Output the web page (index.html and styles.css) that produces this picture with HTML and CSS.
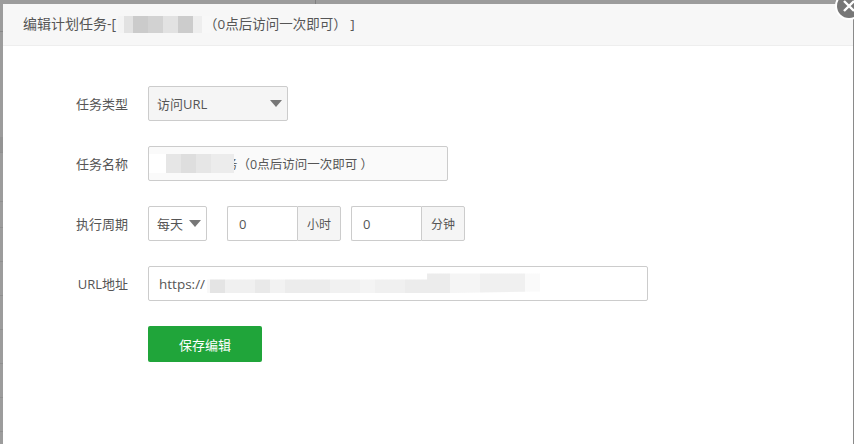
FILE: index.html
```html
<!DOCTYPE html>
<html lang="zh-CN">
<head>
<meta charset="utf-8">
<title>编辑计划任务</title>
<link rel="stylesheet" href="styles.css">
</head>
<body>
<div class="backdrop">
  <div class="modal">
    <a class="close" aria-label="关闭">
      <svg viewBox="0 0 20 20" width="20" height="20"><path d="M5 5l10 10M15 5L5 15" stroke="#fff" stroke-width="2.4" fill="none"/></svg>
    </a>
    <header class="modal-head">编辑计划任务-[<span class="blur blur-title"></span><span class="head-tail">（0点后访问一次即可） ]</span></header>
    <form class="form">
      <div class="row">
        <label class="label">任务类型</label>
        <div class="select select-type">访问URL<i class="caret"></i></div>
      </div>
      <div class="row">
        <label class="label">任务名称</label>
        <div class="input input-name"><span class="blur blur-name"></span>务（0点后访问一次即可 ）</div>
      </div>
      <div class="row">
        <label class="label">执行周期</label>
        <div class="select select-cycle">每天<i class="caret"></i></div>
        <div class="group group-first"><div class="input num">0</div><div class="addon">小时</div></div>
        <div class="group"><div class="input num">0</div><div class="addon">分钟</div></div>
      </div>
      <div class="row">
        <label class="label">URL地址</label>
        <div class="input input-url">https://<span class="blur blur-url"></span></div>
      </div>
      <div class="row">
        <span class="label"></span>
        <button type="button" class="save">保存编辑</button>
      </div>
    </form>
  </div>
</div>
</body>
</html>
```

FILE: styles.css
```css
* { box-sizing: border-box; }
html, body { margin: 0; height: 100%; overflow: hidden; }
body { font-family: "Open Sans", "Noto Sans CJK SC", sans-serif; font-size: 13px; color: #555; }
.backdrop {
  position: relative;
  width: 854px;
  height: 444px;
  padding: 4px 1px 0 3px;
  background-color: #9c9c9c;
  background-image:
    linear-gradient(#808080, #808080),
    linear-gradient(#8a8a8a, #8a8a8a),
    linear-gradient(#888, #888),
    linear-gradient(#909090, #909090),
    linear-gradient(#909090, #909090),
    linear-gradient(#909090, #909090),
    linear-gradient(#909090, #909090),
    linear-gradient(#909090, #909090),
    linear-gradient(#909090, #909090),
    linear-gradient(#909090, #909090),
    linear-gradient(#909090, #909090),
    linear-gradient(#909090, #909090),
    linear-gradient(#949494, #949494);
  background-size: 1px 4px, 1px 424px, 3px 1px, 3px 1px, 3px 1px, 3px 1px, 3px 1px, 3px 1px, 3px 1px, 3px 1px, 3px 1px, 3px 1px, 3px 15px;
  background-position: 315px 0, 853px 20px, 0 31px, 0 201px, 0 227px, 0 261px, 0 295px, 0 329px, 0 363px, 0 397px, 0 431px, 0 152px, 0 137px;
  background-repeat: no-repeat;
}
.modal { position: relative; height: 440px; background: #fff; }
.close {
  position: absolute;
  top: -10px;
  right: -8px;
  width: 24px;
  height: 24px;
  display: flex;
  align-items: center;
  justify-content: center;
  border-radius: 50%;
  background: #777;
  box-shadow: 0 0 0 2px #fff;
}
.modal-head {
  height: 42px;
  padding-left: 20px;
  line-height: 40px;
  font-size: 14px;
  color: #555;
  background: #f7f7f7;
  border-bottom: 1px solid #eee;
  white-space: nowrap;
}
.head-tail { font-size: 13.5px; }
.form { padding-top: 40px; }
.row { display: flex; align-items: stretch; height: 35px; margin-bottom: 25px; }
.label { width: 125px; margin-right: 20px; line-height: 37px; text-align: right; color: #555; }
.select, .input { border: 1px solid #ccc; line-height: 33px; color: #555; }
.select { display: flex; align-items: center; justify-content: space-between; padding: 2px 8px 0; border-radius: 2px; }
.select-type { width: 140px; background: #f5f5f5; }
.select-cycle { width: 59px; background: #fff; }
.caret { width: 0; height: 0; margin: -2px -3px 0 0; border-left: 6px solid transparent; border-right: 6px solid transparent; border-top: 7px solid #777; }
.input { padding: 1px 11px 0; border-radius: 2px; white-space: nowrap; }
.input-name { width: 300px; background: #fafafa; padding-left: 0; font-size: 12.5px; }
.input-url { width: 500px; padding-left: 10px; font-size: 13.5px; }
.group { display: flex; margin-left: 10px; }
.group-first { margin-left: 20px; }
.num { width: 70px; border-radius: 2px 0 0 2px; border-right: 0; font-size: 13px; }
.addon { width: 44px; padding-top: 1px; line-height: 33px; font-size: 12px; text-align: center; color: #555; background: #f5f5f5; border: 1px solid #ccc; border-radius: 0 2px 2px 0; }
.save {
  width: 114px;
  height: 36px;
  padding: 0;
  border: 0;
  border-radius: 2px;
  background: #20a53a;
  color: #fff;
  font: inherit;
}
.blur { display: inline-block; vertical-align: middle; position: relative; }
.blur-title {
  width: 93px;
  height: 17px;
  margin: -2px -7px 0 2px;
  z-index: 1;
  background: linear-gradient(90deg, #f4f4f4 0 6px, #e2e2e2 6px 15px, #cbcbcb 15px 30px, #d2d2d2 30px 45px, #e2e2e2 45px 60px, #ccc 60px 75px, #eee 75px 84px, #f8f8f8 84px 93px);
}
.blur-name {
  width: 85px;
  height: 19px;
  margin: -5px -9px 0 0;
  z-index: 1;
  background: linear-gradient(90deg, #fff 0 17px, #e6e6e6 17px 32px, #dedede 32px 47px, #e6e6e6 47px 62px, #ececec 62px 85px);
}
.blur-url {
  width: 333px;
  height: 20px;
  margin: -4px 0 0 2px;
  clip-path: polygon(0 6px, 220px 6px, 220px 0, 333px 0, 333px 18px, 220px 20px, 0 20px);
  background: linear-gradient(90deg, #f8f8f8 0 3px, #e4e4e4 3px 18px, #f0f0f0 18px 48px, #e9e9e9 48px 63px, #f2f2f2 63px 78px, #ececec 78px 123px, #f1f1f1 123px 153px, #f4f4f4 153px 168px, #f0f0f0 168px 198px, #ececec 198px 243px, #f5f5f5 243px 273px, #f0f0f0 273px 318px, #fafafa 318px 333px);
}
```
